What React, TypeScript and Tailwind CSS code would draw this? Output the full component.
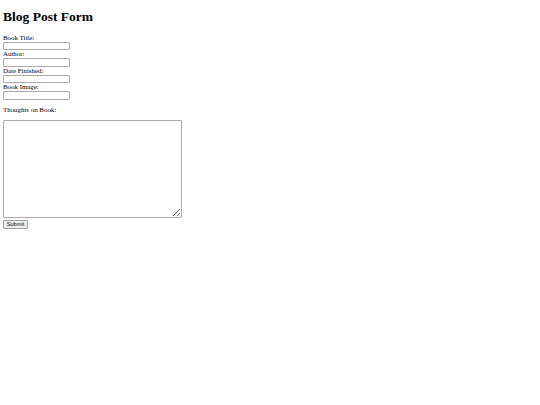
const Field = ({ label }: { label: string }) => (
  <div>
    <label className="block text-[6.9px] leading-[8px] text-black">{label}</label>
    <input
      type="text"
      className="block h-[8.5px] w-[67px] border border-[#ababab] rounded-[1px] bg-white"
    />
  </div>
);

export default function App() {
  return (
    <div className="min-h-[405px] bg-white pl-[3px] pt-[9px] font-['Liberation_Serif',serif] text-black">
      <h1 className="m-0 text-[13.5px] font-bold leading-[15.5px]">Blog Post Form</h1>
      <form className="mt-[9px]" onSubmit={(e) => e.preventDefault()}>
        <Field label="Book Title:" />
        <Field label="Author:" />
        <Field label="Date Finished:" />
        <Field label="Book Image:" />
        <p className="my-[6.25px] text-[6.9px] leading-[8px]">Thoughts on Book:</p>
        <textarea className="block h-[97.5px] w-[179px] border border-[#ababab] rounded-[1px] bg-white" />
        <button
          type="submit"
          className="mt-[2px] block h-[9px] w-[25px] rounded-[1px] border border-[#a0a0a0] bg-[#efefef] font-['Liberation_Sans',sans-serif] text-[5.6px] leading-[7px] text-black"
        >
          Submit
        </button>
      </form>
    </div>
  );
}
